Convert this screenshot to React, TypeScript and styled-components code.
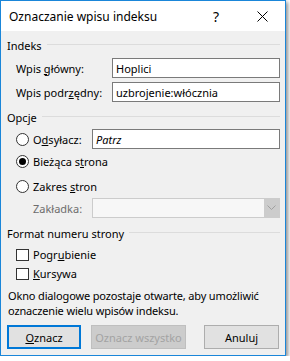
import React from "react";
import styled, { createGlobalStyle } from "styled-components";

const Global = createGlobalStyle`
  html, body { margin: 0; padding: 0; background: #ffffff; }
  body { font-family: "Noto Sans", "Segoe UI", sans-serif; font-size: 11px; color: #000; }
  * { box-sizing: border-box; }
`;

const Window = styled.div`
  width: 286px;
  height: 356px;
  border: 1px solid #1a86d9;
  background: #f0f0f0;
  box-shadow: 2px 2px 4px rgba(0, 0, 0, 0.45);
  display: flex;
  flex-direction: column;
  white-space: nowrap;
`;

const TitleBar = styled.div`
  height: 30px;
  background: #ffffff;
  display: flex;
  align-items: center;
  padding-left: 8px;
  flex-shrink: 0;
`;

const Title = styled.div`
  flex: 1;
  font-size: 12px;
`;

const TitleButton = styled.div`
  width: 46px;
  height: 30px;
  display: flex;
  align-items: center;
  justify-content: center;
  font-size: 14px;
`;

const Body = styled.div`
  flex: 1;
  padding: 0 5px 0 6px;
  display: flex;
  flex-direction: column;
`;

const GroupHeader = styled.div<{ $mt: number }>`
  margin-top: ${(p) => p.$mt}px;
  height: 16px;
  display: flex;
  align-items: center;
  gap: 5px;
  &::after {
    content: "";
    flex: 1;
    height: 1px;
    background: #dcdcdc;
    margin-top: -2px;
  }
`;

const Row = styled.div<{ $mt: number; $h?: number }>`
  margin-top: ${(p) => p.$mt}px;
  height: ${(p) => p.$h ?? 20}px;
  display: flex;
  align-items: center;
  padding-left: 9px;
`;

const Label = styled.div<{ $w: number; $indent?: number; $disabled?: boolean }>`
  width: ${(p) => p.$w}px;
  padding-left: ${(p) => p.$indent ?? 0}px;
  flex-shrink: 0;
  color: ${(p) => (p.$disabled ? "#6d6d6d" : "#000")};
`;

const TextBox = styled.div<{ $italic?: boolean }>`
  flex: 1;
  height: 20px;
  border: 1px solid #7a7a7a;
  background: #fff;
  padding-left: 3px;
  display: flex;
  align-items: center;
  font-style: ${(p) => (p.$italic ? "italic" : "normal")};
`;

const Combo = styled.div`
  flex: 1;
  height: 20px;
  border: 1px solid #cccccc;
  background: #f7f7f7;
  display: flex;
  justify-content: flex-end;
`;

const ComboArrow = styled.div`
  width: 15px;
  background: #cccccc;
  display: flex;
  align-items: center;
  justify-content: center;
`;

const Radio = styled.span<{ $checked?: boolean }>`
  width: 13px;
  height: 13px;
  border-radius: 50%;
  border: 1px solid #333;
  background: #fff;
  margin-right: 4px;
  display: inline-flex;
  align-items: center;
  justify-content: center;
  flex-shrink: 0;
  &::after {
    content: "";
    width: 7px;
    height: 7px;
    border-radius: 50%;
    background: ${(p) => (p.$checked ? "#000" : "transparent")};
  }
`;

const Check = styled.span`
  width: 13px;
  height: 12px;
  border: 1px solid #333;
  background: #fff;
  margin-right: 4px;
  flex-shrink: 0;
`;

const Paragraph = styled.div`
  margin-top: 6px;
  line-height: 15px;
  padding-left: 1px;
  letter-spacing: -0.15px;
`;

const Buttons = styled.div`
  margin-top: 7px;
  display: flex;
`;

const Button = styled.div<{ $w: number; $ml: number; $default?: boolean; $disabled?: boolean }>`
  width: ${(p) => p.$w}px;
  margin-left: ${(p) => p.$ml}px;
  height: 24px;
  display: flex;
  align-items: center;
  justify-content: center;
  background: ${(p) => (p.$disabled ? "#cccccc" : "#e1e1e1")};
  border: ${(p) => (p.$default ? "2px solid #0078d7" : p.$disabled ? "1px solid #bfbfbf" : "1px solid #adadad")};
  color: ${(p) => (p.$disabled ? "#a3a3a3" : "#000")};
`;

const U = styled.span`
  text-decoration: underline;
`;

export default function App() {
  return (
    <>
      <Global />
      <Window>
        <TitleBar>
          <Title>Oznaczanie wpisu indeksu</Title>
          <TitleButton>?</TitleButton>
          <TitleButton>
            <svg width="11" height="11" viewBox="0 0 11 11">
              <path d="M0.5 0.5 L10.5 10.5 M10.5 0.5 L0.5 10.5" stroke="#000" strokeWidth="1" />
            </svg>
          </TitleButton>
        </TitleBar>
        <Body>
          <GroupHeader $mt={6}>Indeks</GroupHeader>
          <Row $mt={5}>
            <Label $w={96}>Wpis <U>g</U>łówny:</Label>
            <TextBox>Hoplici</TextBox>
          </Row>
          <Row $mt={4}>
            <Label $w={96}>Wpis podr<U>z</U>ędny:</Label>
            <TextBox>uzbrojenie:włócznia</TextBox>
          </Row>
          <GroupHeader $mt={7}>Opcje</GroupHeader>
          <Row $mt={4}>
            <Radio />
            <Label $w={59}>O<U>d</U>syłacz:</Label>
            <TextBox $italic>Patrz</TextBox>
          </Row>
          <Row $mt={2}>
            <Radio $checked />
            <span>Bieżąca s<U>t</U>rona</span>
          </Row>
          <Row $mt={5}>
            <Radio />
            <span>Zakres <U>s</U>tron</span>
          </Row>
          <Row $mt={2}>
            <Label $w={76} $indent={17} $disabled>Zakładka:</Label>
            <Combo>
              <ComboArrow>
                <svg width="9" height="6" viewBox="0 0 9 6">
                  <path d="M0.5 0.5 L4.5 4.5 L8.5 0.5" stroke="#a0a0a0" fill="none" strokeWidth="1" />
                </svg>
              </ComboArrow>
            </Combo>
          </Row>
          <GroupHeader $mt={7}>Format numeru strony</GroupHeader>
          <Row $mt={5} $h={17}>
            <Check />
            <span>Pogr<U>u</U>bienie</span>
          </Row>
          <Row $mt={2} $h={17}>
            <Check />
            <span><U>K</U>ursywa</span>
          </Row>
          <Paragraph>
            Okno dialogowe pozostaje otwarte, aby umożliwić
            <br />
            oznaczenie wielu wpisów indeksu.
          </Paragraph>
          <Buttons>
            <Button $w={74} $ml={0} $default><span><U>O</U>znacz</span></Button>
            <Button $w={95} $ml={10} $disabled>Oznacz wszystko</Button>
            <Button $w={75} $ml={18}>Anuluj</Button>
          </Buttons>
        </Body>
      </Window>
    </>
  );
}
